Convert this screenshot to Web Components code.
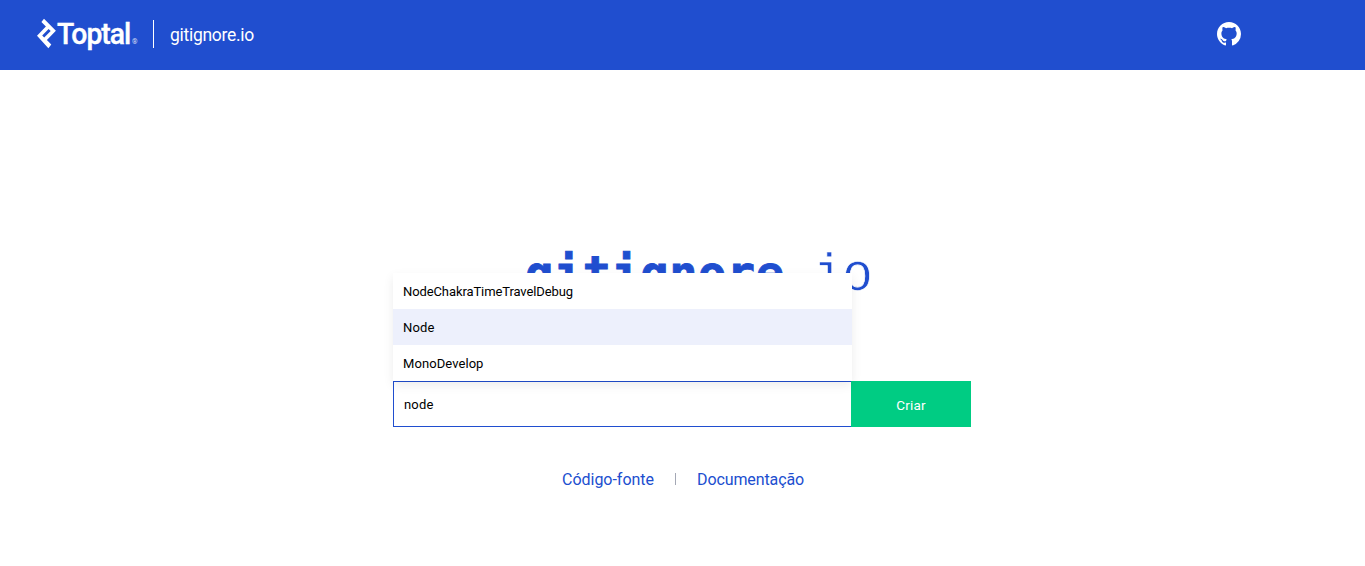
<!DOCTYPE html>
<html lang="pt-BR">
<head>
<meta charset="utf-8">
<title>gitignore.io</title>
<style>
body{margin:0;background:#fff;font-family:Roboto,"Liberation Sans",sans-serif;height:566px;overflow:hidden}
</style>
</head>
<body>
<gi-page></gi-page>
<script>
const define=(name,html,ready)=>customElements.define(name,class extends HTMLElement{
  connectedCallback(){
    if(this.shadowRoot)return;
    this.attachShadow({mode:'open'}).innerHTML=html;
    if(ready)ready(this);
  }
});

/* One line of text, tracked so that it fills the width given in its attribute. */
define('fit-text',`<style>:host{display:inline-block;white-space:nowrap}span{display:inline-block}</style><span><slot></slot></span>`,el=>{
  const s=el.shadowRoot.querySelector('span');
  const target=parseFloat(el.getAttribute('width'));
  const n=el.textContent.length;
  el.style.letterSpacing=((target-s.getBoundingClientRect().width)/n)+'px';
});

define('toptal-logo',`<style>
:host{display:flex;width:101px;height:32px;color:#fff}
svg{flex:none;width:20px;height:32px}
.word{flex:none;font:500 29.5px/32px Roboto,sans-serif;width:75px;height:32px;-webkit-text-stroke:.4px #fff}
.word span{display:inline-block;transform:scaleX(.96);transform-origin:0 0;letter-spacing:-1.05px}
.reg{font:7px/10px Roboto,sans-serif;margin-top:19px;opacity:.8}
</style>
<svg viewBox="0 0 20 32"><path fill="#fff" fill-rule="evenodd" d="M7 .8 18.9 12.7 9.9 22.1 14.3 26.5 11.4 30.2 0 17.8 8.9 8.4 4.4 3.9ZM11.6 11.1 5.2 17.6 7.2 19.6 13.7 13.1Z"/></svg>
<div class="word"><span>Toptal</span></div><div class="reg">®</div>`);

define('github-link',`<style>:host{display:block;width:24px;height:24px}svg{display:block}</style>
<svg width="24" height="24" viewBox="0 0 16 16" fill="#fff"><path d="M8 0C3.58 0 0 3.58 0 8c0 3.54 2.29 6.53 5.47 7.59.4.07.55-.17.55-.38 0-.19-.01-.82-.01-1.49-2.01.37-2.53-.49-2.69-.94-.09-.23-.48-.94-.82-1.13-.28-.15-.68-.52-.01-.53.63-.01 1.08.58 1.23.82.72 1.21 1.87.87 2.33.66.07-.52.28-.87.51-1.07-1.78-.2-3.64-.89-3.64-3.95 0-.87.31-1.59.82-2.15-.08-.2-.36-1.02.08-2.12 0 0 .67-.21 2.2.82.64-.18 1.32-.27 2-.27s1.36.09 2 .27c1.53-1.04 2.2-.82 2.2-.82.44 1.1.16 1.92.08 2.12.51.56.82 1.27.82 2.15 0 3.07-1.87 3.75-3.65 3.95.29.25.54.73.54 1.48 0 1.07-.01 1.93-.01 2.2 0 .21.15.46.55.38A8.01 8.01 0 0 0 16 8c0-4.42-3.58-8-8-8z"/></svg>`);

define('gi-header',`<style>
:host{display:flex;box-sizing:border-box;height:70px;padding:0 124px 0 37px;background:#204ecf;color:#fff;align-items:flex-start}
toptal-logo{margin-top:18px}
i{width:1px;height:28px;background:#fff;margin:20px 16px 0 15px}
fit-text{font-size:17.5px;line-height:24px;margin-top:23px}
github-link{margin:22px 0 0 auto}
</style><toptal-logo></toptal-logo><i></i><fit-text width="84">gitignore.io</fit-text><github-link></github-link>`);

define('gi-title',`<style>
:host{display:flex;height:60px;color:#204ecf;font:bold 47px/60px "DejaVu Sans Mono",monospace;-webkit-text-stroke:.8px #204ecf}
.light{font:400 51px/60px "Liberation Mono",monospace;-webkit-text-stroke:.7px #fff;margin-top:4px}
</style><fit-text width="259.5">gitignore</fit-text><fit-text class="light" width="86.5">.io</fit-text>`);

define('gi-option',`<style>
:host{display:block;box-sizing:border-box;height:36px;padding:0 10px;font-size:13px;line-height:37px;color:#000;background:#fff}
:host([active]){background:#edf0fc}
</style><slot></slot>`);

define('gi-search',`<style>
:host{display:flex;position:relative;width:578px;height:46px;font-size:13px}
.field{box-sizing:border-box;width:458px;border:1px solid #204ecf;border-right:0;background:#fff;padding:0 10px;line-height:46px;color:#000}
.menu{position:absolute;left:0;bottom:46px;width:459px;box-shadow:0 4px 10px rgba(0,0,0,.08)}
.button{width:120px;background:#00cc83;color:#fff;text-align:center;line-height:49px;font-size:13.5px}
</style>
<div class="field"><fit-text width="29.5">node</fit-text></div>
<div class="button"><fit-text width="29.5">Criar</fit-text></div>
<div class="menu">
<gi-option><fit-text width="170">NodeChakraTimeTravelDebug</fit-text></gi-option>
<gi-option active><fit-text width="31.5">Node</fit-text></gi-option>
<gi-option><fit-text width="80.5">MonoDevelop</fit-text></gi-option>
</div>`);

define('gi-links',`<style>
:host{display:flex;color:#204ecf;font-size:16px;line-height:24px;align-items:center}
i{width:1px;height:12px;background:#a4a8b5;margin:0 21px 2px 21px}
</style><fit-text width="92">Código-fonte</fit-text><i></i><fit-text width="107">Documentação</fit-text>`);

define('gi-page',`<style>
:host{display:flex;flex-direction:column;height:566px}
main{display:flex;flex-direction:column;align-items:flex-start}
gi-title{margin:173px 0 0 525px}
gi-search{margin:78px 0 0 393px}
gi-links{margin:41px 0 0 562px}
</style><gi-header></gi-header><main><gi-title></gi-title><gi-search></gi-search><gi-links></gi-links></main>`);
</script>
</body>
</html>
